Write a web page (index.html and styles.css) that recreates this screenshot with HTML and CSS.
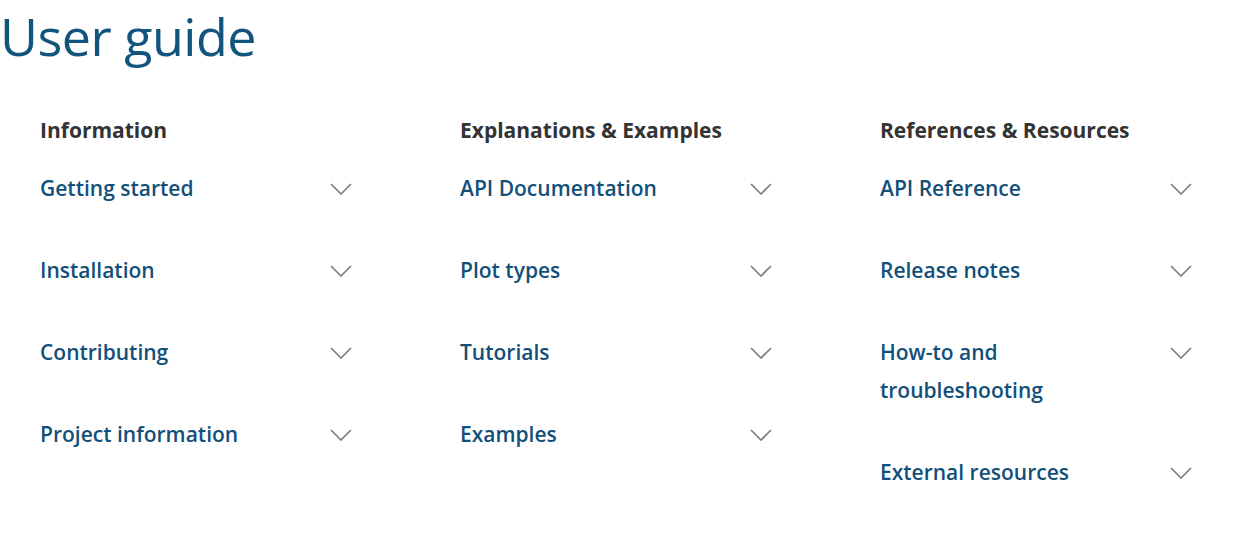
FILE: index.html
```html
<!DOCTYPE html>
<html>
<head>
<meta charset="utf-8">
<link rel="stylesheet" href="styles.css">
</head>
<body>
<h1 class="title">User guide</h1>
<div class="grid">
  <section class="col">
    <h2 class="col-head">Information</h2>
    <div class="item"><span class="label">Getting started</span><svg class="chev" viewBox="0 0 22 12"><path d="M1 1 L11 11 L21 1"/></svg></div>
    <div class="item"><span class="label">Installation</span><svg class="chev" viewBox="0 0 22 12"><path d="M1 1 L11 11 L21 1"/></svg></div>
    <div class="item"><span class="label">Contributing</span><svg class="chev" viewBox="0 0 22 12"><path d="M1 1 L11 11 L21 1"/></svg></div>
    <div class="item"><span class="label">Project information</span><svg class="chev" viewBox="0 0 22 12"><path d="M1 1 L11 11 L21 1"/></svg></div>
  </section>
  <section class="col">
    <h2 class="col-head">Explanations &amp; Examples</h2>
    <div class="item"><span class="label">API Documentation</span><svg class="chev" viewBox="0 0 22 12"><path d="M1 1 L11 11 L21 1"/></svg></div>
    <div class="item"><span class="label">Plot types</span><svg class="chev" viewBox="0 0 22 12"><path d="M1 1 L11 11 L21 1"/></svg></div>
    <div class="item"><span class="label">Tutorials</span><svg class="chev" viewBox="0 0 22 12"><path d="M1 1 L11 11 L21 1"/></svg></div>
    <div class="item"><span class="label">Examples</span><svg class="chev" viewBox="0 0 22 12"><path d="M1 1 L11 11 L21 1"/></svg></div>
  </section>
  <section class="col">
    <h2 class="col-head">References &amp; Resources</h2>
    <div class="item"><span class="label">API Reference</span><svg class="chev" viewBox="0 0 22 12"><path d="M1 1 L11 11 L21 1"/></svg></div>
    <div class="item"><span class="label">Release notes</span><svg class="chev" viewBox="0 0 22 12"><path d="M1 1 L11 11 L21 1"/></svg></div>
    <div class="item"><span class="label">How-to and<br>troubleshooting</span><svg class="chev" viewBox="0 0 22 12"><path d="M1 1 L11 11 L21 1"/></svg></div>
    <div class="item"><span class="label">External resources</span><svg class="chev" viewBox="0 0 22 12"><path d="M1 1 L11 11 L21 1"/></svg></div>
  </section>
</div>
</body>
</html>
```

FILE: styles.css
```css
html, body {
  margin: 0;
  padding: 0;
  background: #fff;
}
body {
  font-family: "Open Sans", "Noto Sans", sans-serif;
}
.title {
  margin: 0;
  padding: 4px 0 0 0;
  font-size: 52px;
  font-weight: 400;
  line-height: 64px;
  color: #11557c;
  letter-spacing: -0.5px;
}
.grid {
  display: grid;
  grid-template-columns: 320px 320px 320px;
  column-gap: 100px;
  padding: 47px 0 0 40px;
}
.col-head {
  margin: 0 0 24px 0;
  font-size: 21px;
  font-weight: 700;
  line-height: 30px;
  color: #333;
}
.item {
  display: flex;
  align-items: flex-start;
  justify-content: space-between;
  margin-bottom: 44px;
}
.label {
  font-size: 21px;
  font-weight: 600;
  line-height: 38px;
  color: #12507a;
}
.chev {
  width: 22px;
  height: 12px;
  margin-top: 14px;
  margin-right: 8px;
  fill: none;
  stroke: #7a7a7a;
  stroke-width: 1.6;
}
```
